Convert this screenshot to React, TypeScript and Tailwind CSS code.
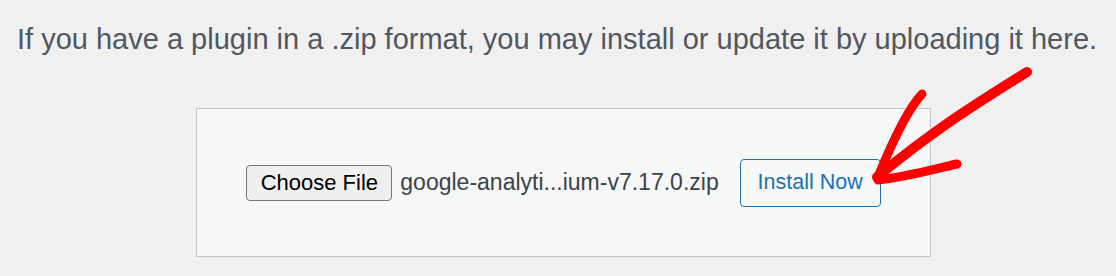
import React from 'react';

const font = { fontFamily: '"Liberation Sans", Arial, sans-serif' };

export default function App() {
  return (
    <div className="relative h-[276px] w-[1116px] overflow-hidden bg-[#f0f0f1]" style={font}>
      <p className="pl-[17px] pt-[22px] text-[29px] leading-[34px] text-[#50575e] whitespace-nowrap">
        If you have a plugin in a .zip format, you may install or update it by uploading it here.
      </p>

      <div className="ml-[196px] mt-[52px] flex h-[149px] w-[735px] items-center justify-center border border-[#c3c4c7] bg-[#f6f7f7]">
        <div className="flex items-center">
          <button className="h-[36px] w-[146px] rounded-[4px] border border-[#767676] bg-[#efefef] text-[22px] text-black">
            Choose File
          </button>
          <span className="ml-[8px] text-[23px] text-[#3c434a]">google-analyti...ium-v7.17.0.zip</span>
          <button className="ml-[21px] h-[48px] w-[141px] rounded-[4px] border border-[#2271b1] bg-[#f6f7f7] text-[21.5px] text-[#2271b1]">
            Install Now
          </button>
        </div>
      </div>

      {/* hand-drawn red arrow */}
      <svg className="pointer-events-none absolute left-0 top-0" width="1116" height="276">
        <g fill="none" stroke="#ff0000" strokeLinecap="round" strokeLinejoin="round">
          <path d="M1027 72 C 990 95, 940 125, 877 177" strokeWidth="10" />
          <path d="M922 94 C 907 110, 893 140, 878 177" strokeWidth="9" />
          <path d="M957 164 C 930 170, 905 177, 878 180" strokeWidth="9" />
        </g>
      </svg>
    </div>
  );
}
